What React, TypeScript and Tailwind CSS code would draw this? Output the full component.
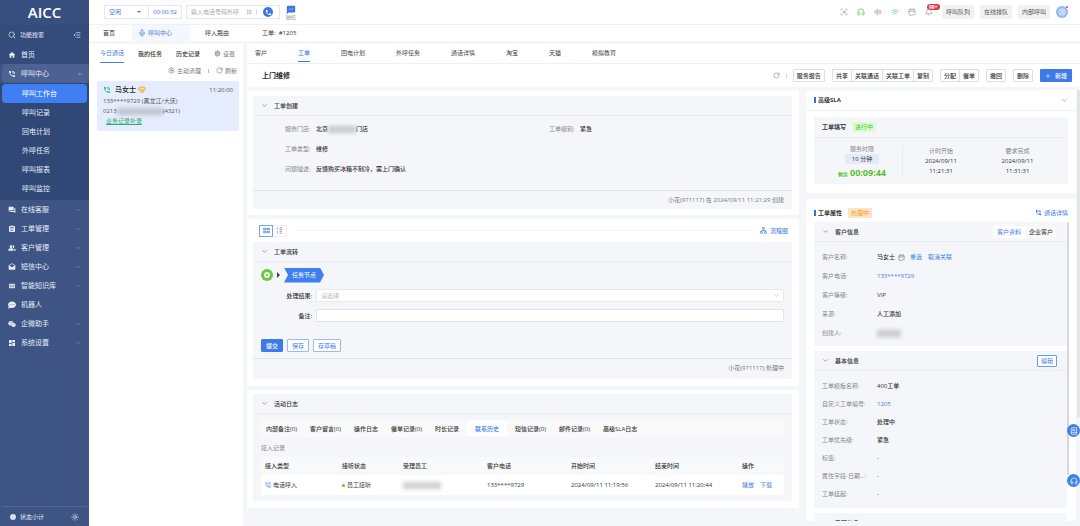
import { useState, type ReactNode } from "react";
import clsx from "clsx";
import {
  AudioLines,
  Bell,
  BookText,
  CalendarMinus,
  ChevronDown,
  ChevronUp,
  CircleUserRound,
  Grip,
  Headphones,
  ListIndentDecrease,
  Mic,
  Network,
  PhoneIncoming,
  Plus,
  RotateCw,
  ScanSearch,
  Search,
  Settings,
  Sun,
  Wifi,
} from "lucide-react";
import { FaCommentDots, FaWeixin } from "react-icons/fa";
import {
  MdAssignment,
  MdDashboard,
  MdDrafts,
  MdForum,
  MdHome,
  MdOutlineSettings,
  MdPeopleAlt,
  MdPhone,
  MdPhoneInTalk,
  MdSms,
  MdViewModule,
} from "react-icons/md";

type MenuItem = { label: string; icon: ReactNode; arrow?: boolean };

const menu: MenuItem[] = [
  { label: "在线客服", icon: <MdForum />, arrow: true },
  { label: "工单管理", icon: <MdAssignment />, arrow: true },
  { label: "客户管理", icon: <MdPeopleAlt />, arrow: true },
  { label: "短信中心", icon: <MdDrafts />, arrow: true },
  { label: "智能知识库", icon: <MdViewModule />, arrow: true },
  { label: "机器人", icon: <FaCommentDots /> },
  { label: "企微助手", icon: <FaWeixin />, arrow: true },
  { label: "系统设置", icon: <MdDashboard />, arrow: true },
];

const callMenu = ["呼叫工作台", "呼叫记录", "回电计划", "外呼任务", "呼叫报表", "呼叫监控"];
const detailTabs = ["客户", "工单", "回电计划", "外呼任务", "通话详情", "淘宝", "天猫", "模拟教育"];
const logTabs = [
  "内部备注(0)",
  "客户留言(0)",
  "操作日志",
  "催单记录(0)",
  "时长记录",
  "联系历史",
  "短信记录(0)",
  "邮件记录(0)",
  "高级SLA日志",
];
const actionGroups = [["服务报告"], ["共享", "关联通话", "关联工单", "复制"], ["分配", "催单"], ["撤回"], ["删除"]];

export default function App() {
  return (
    <div className="flex h-screen overflow-hidden bg-[#f5f6fa] font-['Open_Sans','Noto_Sans_CJK_SC',sans-serif] text-[6px] leading-[10px] text-[#333]">
      <Sidebar />
      <div className="flex min-w-0 flex-1 flex-col">
        <TopBar />
        <PageTabs />
        <div className="flex min-h-0 flex-1 gap-1 pt-[3px]">
          <CallList />
          <main className="flex min-w-0 flex-1 flex-col">
            <DetailTabs />
            <ActionBar />
            <div className="flex min-h-0 flex-1 pt-[3px]">
              <div className="mr-[7px] flex min-w-0 flex-1 flex-col gap-1 overflow-hidden">
                <CreatePanel />
                <FlowPanel />
                <LogPanel />
              </div>
              <aside className="flex w-[270px] shrink-0 flex-col gap-1.5 pb-[5px]">
                <SlaPanel />
                <PropsPanel />
              </aside>
              <span className="ml-px h-3/4 w-[3px] shrink-0 bg-[#e3e4e6]" />
            </div>
          </main>
        </div>
      </div>
      <div className="fixed right-0 bottom-[39px] flex flex-col gap-[37px]">
        <button aria-label="知识库" className="grid size-[13px] place-items-center rounded-full bg-[#4381e6] text-white">
          <BookText className="size-2" />
        </button>
        <button aria-label="客服" className="grid size-[13px] place-items-center rounded-full bg-[#4381e6] text-white">
          <Headphones className="size-2" />
        </button>
      </div>
    </div>
  );
}

/* 左侧导航 */
function Sidebar() {
  return (
    <nav className="flex w-[89px] shrink-0 flex-col bg-[#3d5485] text-[7px] text-[#e6ecf8]">
      <div className="bg-[#38507f] text-center text-[15px] leading-[25px] font-semibold text-white">AICC</div>
      <div className="flex h-[20px] items-center bg-[#334c7b] px-2 text-[6px]">
        <Search className="mr-1 size-2" />
        <input aria-label="功能搜索" placeholder="功能搜索" className="w-0 flex-1 bg-transparent outline-none placeholder:text-[#e6ecf8]" />
        <ListIndentDecrease className="size-2" />
      </div>
      <a href="#" className="flex h-[19px] items-center gap-[5px] bg-[#334c7b] px-2">
        <MdHome className="size-2" />
        首页
      </a>
      <button className="ml-0.5 flex h-[19px] items-center gap-[5px] rounded-sm bg-[#4c6293] px-1.5">
        <MdPhoneInTalk className="size-2" />
        呼叫中心
        <ChevronUp className="ml-auto size-1.5" />
      </button>
      <div className="bg-[#2f4876] px-0.5 pt-px pb-[2px]">
        {callMenu.map((m, i) => (
          <a
            key={m}
            href="#"
            className={clsx("flex h-[19px] items-center rounded-sm pl-5", i === 0 && "bg-[#3f7ff3] text-white")}
          >
            {m}
          </a>
        ))}
      </div>
      {menu.map((m) => (
        <button key={m.label} className="flex h-[19px] items-center gap-[5px] px-2 [&>svg:first-child]:size-2">
          {m.icon}
          {m.label}
          {m.arrow && <ChevronDown className="ml-auto size-1.5 text-[#93a4c8]" />}
        </button>
      ))}
      <div className="mx-0.5 mt-auto flex h-[20px] items-center border-t border-[#4e679b] px-2 text-[6px]">
        <span className="mr-1 size-[6px] rounded-full bg-[#d5def0]" />
        状态小计
        <Sun className="ml-auto size-2" />
      </div>
    </nav>
  );
}

function TopBar() {
  return (
    <header className="flex h-[25px] shrink-0 items-center border-b border-[#f0f1f3] bg-white pr-3 pl-[15px]">
      <div className="flex h-[14px] w-[78px] items-center rounded-[1px] border border-[#e3e6ec] px-1 text-[#3d74d8]">
        <select aria-label="坐席状态" className="w-7 appearance-none bg-transparent outline-none">
          <option>空闲</option>
        </select>
        <span className="mr-1 border-x-2 border-t-2 border-x-transparent border-t-[#3d74d8]" />
        <span className="ml-auto border-l border-[#dfe3ea] pl-1">00:00:32</span>
      </div>
      <div className="ml-1 flex h-[14px] w-[94px] items-center rounded-[1px] border border-[#e3e6ec] pr-1.5 pl-1">
        <input
          aria-label="电话号码"
          placeholder="输入电话号码外呼"
          className="w-0 flex-1 bg-transparent outline-none placeholder:text-[#aaa]"
        />
        <Grip className="mr-1 size-1.5 text-[#aaa]" />
        <span className="mr-1.5 h-1.5 w-px bg-[#ddd]" />
        <button aria-label="呼出" className="grid size-[10px] shrink-0 place-items-center rounded-full bg-[#3f7bdb] text-white">
          <MdPhone className="size-[7px]" />
        </button>
      </div>
      <button className="ml-1.5 flex flex-col items-center text-[#777]">
        <MdSms className="size-2.5 text-[#3f74e0]" />
        <span className="text-[5px] leading-[5px]">短信</span>
      </button>
      <div className="ml-auto flex items-center gap-[9px] text-[#999] [&>svg]:size-2">
        <ScanSearch />
        <Headphones className="text-[#58c94f]" />
        <AudioLines />
        <Wifi className="text-[#54c9a0]" />
        <CalendarMinus />
        <span className="relative">
          <Bell className="size-2" />
          <b className="absolute -top-1 left-0.5 rounded-full bg-[#e0393e] px-0.5 text-[5px] leading-[6px] text-white">99+</b>
        </span>
      </div>
      <div className="ml-[9px] flex items-center gap-1.5">
        {["呼叫队列", "在线排队", "内部呼叫"].map((b) => (
          <button key={b} className="h-[14px] rounded-[2px] bg-[#f1f1f2] px-1 text-[#555]">
            {b}
          </button>
        ))}
        <span className="relative grid size-3 place-items-center rounded-full bg-[#94b5f2] text-white">
          <CircleUserRound className="size-2" />
          <i className="absolute top-0 right-0 size-[2px] rounded-full bg-[#e0393e]" />
        </span>
      </div>
    </header>
  );
}

function PageTabs() {
  return (
    <div className="flex h-4 shrink-0 items-center bg-white pl-[14px]">
      <a href="#">首页</a>
      <a href="#" className="ml-[17px] flex h-full w-[58px] items-center gap-0.5 bg-[#f4f7fd] pl-1.5 text-[#4a80e0]">
        <Mic className="size-2" />
        呼叫中心
      </a>
      <a href="#" className="ml-[15px]">呼入路由</a>
      <a href="#" className="ml-[33px]">工单:&nbsp; #1205</a>
    </div>
  );
}

/* 通话列表 */
function CallList() {
  return (
    <section className="w-[154px] shrink-0 bg-white pl-2">
      <div className="flex h-[19px] items-center gap-[14px] pl-[3px]">
        <button className="h-full border-b border-[#4a80e0] text-[#4a80e0]">今日通话</button>
        <button className="font-medium">我的任务</button>
        <button className="font-medium">历史记录</button>
        <button className="flex items-center gap-0.5 text-[#777]">
          <MdOutlineSettings className="size-[7px]" />
          设置
        </button>
      </div>
      <div className="flex h-[15px] items-center justify-end gap-[7px] pr-1.5 text-[#777]">
        <button className="flex items-center gap-0.5">
          <Settings className="size-[7px]" />
          主动清理
        </button>
        <span className="h-1 w-px bg-[#bbb]" />
        <button className="flex items-center gap-0.5">
          <RotateCw className="size-[7px]" />
          刷新
        </button>
      </div>
      <article className="mt-[3px] mr-1 h-[50px] rounded-[2px] bg-[#e5ecfd] px-1.5 pt-1 text-[#555]">
        <div className="flex items-center">
          <MdPhoneInTalk className="mr-1 size-2 text-[#1fbfa0]" />
          <b className="text-[7px] font-medium text-[#222]">马女士</b>
          <VipBadge />
          <time className="ml-auto">11:20:00</time>
        </div>
        <p className="mt-px">133****9729 (黑龙江/大庆)</p>
        <p className="flex items-center">
          0213
          <Masked className="w-[46px]" />
          (4321)
        </p>
        <a href="#" className="ml-[3px] block text-[#2fae6b] underline underline-offset-1">业务记录补录</a>
      </article>
    </section>
  );
}

function VipBadge() {
  return (
    <svg viewBox="0 0 16 16" className="ml-0.5 size-2" fill="none">
      <path d="M4 2h8l3 4-7 8-7-8z" fill="#ffe1b8" stroke="#f2a33c" strokeWidth="2" strokeLinejoin="round" />
      <path d="M5 6l3 4 3-4" stroke="#f2a33c" strokeWidth="1.8" />
    </svg>
  );
}

// 脱敏内容
function Masked({ className }: { className: string }) {
  return <span className={clsx("inline-block h-[7px] shrink-0 bg-[#888]/40 blur-[2px]", className)} />;
}

function DetailTabs() {
  const [tab, setTab] = useState("工单");
  return (
    <div className="flex h-5 shrink-0 gap-[31px] border-b border-[#f0f1f3] bg-white pl-2">
      {detailTabs.map((t) => (
        <button
          key={t}
          onClick={() => setTab(t)}
          className={clsx("mb-px border-b", tab === t ? "border-[#3d7de6] font-medium text-[#3d7de6]" : "border-transparent text-[#444]")}
        >
          {t}
        </button>
      ))}
    </div>
  );
}

function ActionBar() {
  return (
    <div className="flex h-[23px] shrink-0 items-center bg-white pr-2 pl-[15px]">
      <h1 className="mr-auto text-[7px] font-bold text-[#222]">上门维修</h1>
      <button aria-label="刷新" className="text-[#888]">
        <RotateCw className="size-[7px]" />
      </button>
      <span className="mx-1.5 h-1.5 w-px bg-[#ddd]" />
      <div className="flex gap-[7px]">
        {actionGroups.map((group) => (
          <div key={group[0]} className="flex divide-x divide-[#dcdfe4] rounded-[1px] border border-[#dcdfe4]">
            {group.map((a) => (
              <button key={a} className="h-[11px] px-[3px] font-medium whitespace-nowrap">
                {a}
              </button>
            ))}
          </div>
        ))}
        <button className="flex h-[13px] w-8 items-center justify-center gap-1 rounded-[1px] bg-[#3d7be8] font-medium text-white">
          <Plus className="size-1.5" />
          新增
        </button>
      </div>
    </div>
  );
}

function SectionHead({ title, children }: { title: string; children?: ReactNode }) {
  return (
    <div className="flex h-5 items-center border-b border-[#ebedf2] pr-2.5 pl-2">
      <ChevronDown className="mr-1.5 size-[7px] text-[#666]" />
      <h2 className="mr-auto font-medium">{title}</h2>
      {children}
    </div>
  );
}

function Field({ label, children }: { label: string; children: ReactNode }) {
  return (
    <div className="flex h-5 items-center">
      <dt className="w-[31px] text-[#888]">{label}:</dt>
      <dd className="flex items-center font-medium">{children}</dd>
    </div>
  );
}

function CreatePanel() {
  return (
    <section className="rounded-[2px] bg-white py-1.5 pr-[7px] pl-1.5">
      <div className="rounded-[2px] bg-[#f5f6fa]">
        <SectionHead title="工单创建" />
        <dl className="grid grid-cols-[5fr_4fr] px-8 pt-[3px] pb-[11px]">
          <Field label="报修门店">
            北京
            <Masked className="w-[28px]" />
            门店
          </Field>
          <Field label="工单级别">紧急</Field>
          <div className="col-span-2">
            <Field label="工单类型">维修</Field>
          </div>
          <div className="col-span-2">
            <Field label="问题描述">反馈购买冰箱不制冷，需上门确认</Field>
          </div>
        </dl>
        <p className="border-t border-[#e2e4e9] px-2 py-1 text-right text-[#777]">小花(971117) 在 2024/09/11 11:21:29 创建</p>
      </div>
    </section>
  );
}

function FlowPanel() {
  return (
    <section className="rounded-[2px] bg-white pr-[7px] pb-[7px] pl-1.5">
      <div className="flex h-[23px] items-center pr-1 pl-1.5">
        <button aria-label="卡片视图" className="grid h-[12px] w-[14px] place-items-center border border-[#7aa2e8] text-[#5b8de8]">
          <RowsIcon />
        </button>
        <button aria-label="列表视图" className="grid h-[12px] w-[14px] place-items-center border border-l-0 border-[#eceef2] text-[#999]">
          <ColsIcon />
        </button>
        <span className="mx-2 h-px flex-1 bg-[#f1f2f5]" />
        <a href="#" className="flex items-center gap-[3px] text-[#3d7be8]">
          <Network className="size-[7px]" />
          流程图
        </a>
      </div>
      <div className="rounded-[2px] bg-[#f5f6fa]">
        <SectionHead title="工单流转" />
        <div className="flex h-[26px] items-center pl-2">
          <span className="grid size-3 place-items-center rounded-full bg-[#6cc644]">
            <span className="size-[6px] rounded-full border-2 border-[#e9f7e0] bg-[#6cc644]" />
          </span>
          <span className="mx-1 border-y-[3px] border-l-[3px] border-y-transparent border-l-[#444]" />
          <span className="grid h-[15px] w-10 place-items-center bg-[#3f7ff0] text-white [clip-path:polygon(0_0,90%_0,100%_50%,90%_100%,0_100%,10%_50%)]">
            任务节点
          </span>
        </div>
        <form className="pr-2" onSubmit={(e) => e.preventDefault()}>
          <div className="flex h-[15px] items-center">
            <label htmlFor="result" className="w-[63px] pr-1 text-right font-medium">处理结果:</label>
            <div className="relative flex flex-1">
              <select
                id="result"
                className="h-[13px] w-full appearance-none rounded-[1px] border border-[#e6e9ee] bg-white px-1 text-[#bbb] outline-none"
              >
                <option>请选择</option>
              </select>
              <ChevronDown className="pointer-events-none absolute top-[3px] right-1 size-[7px] text-[#aaa]" />
            </div>
          </div>
          <div className="mt-[5px] flex h-[15px] items-center">
            <label htmlFor="remark" className="w-[63px] pr-1 text-right font-medium">备注:</label>
            <input id="remark" className="h-[13px] flex-1 rounded-[1px] border border-[#dfe3ea] bg-white px-1 outline-none" />
          </div>
          <div className="mt-4 mb-1.5 flex gap-1 pl-2">
            <button className="h-[13px] rounded-[1px] border border-[#3d7be8] bg-[#3d7be8] px-1 font-medium text-white">提交</button>
            <button className="h-[13px] rounded-[1px] border border-[#9dbbf0] bg-white px-1 text-[#3d7be8]">保存</button>
            <button className="h-[13px] rounded-[1px] border border-[#9dbbf0] bg-white px-1 text-[#3d7be8]">存草稿</button>
          </div>
        </form>
        <p className="border-t border-[#e2e4e9] px-2 pt-1 pb-1.5 text-right text-[#777]">小花(971117) 处理中</p>
      </div>
    </section>
  );
}

function RowsIcon() {
  return (
    <svg viewBox="0 0 16 16" className="size-[7px]" fill="none" stroke="currentColor" strokeWidth="2">
      <path d="M1 3h6v3H1zM9 3h6v3H9zM1 10h6v3H1zM9 10h6v3H9z" />
    </svg>
  );
}

function ColsIcon() {
  return (
    <svg viewBox="0 0 16 16" className="size-[7px]" fill="none" stroke="currentColor" strokeWidth="2">
      <path d="M3 1v5M3 9v6M8 2h6M8 6h6M8 10h6M8 14h6" />
    </svg>
  );
}

function LogPanel() {
  const [tab, setTab] = useState("联系历史");
  return (
    <section className="rounded-[2px] bg-white pt-1 pr-[7px] pb-[7px] pl-1.5">
      <div className="rounded-[2px] bg-[#f5f6fa] pb-1.5">
        <SectionHead title="活动日志" />
        <div className="mx-2 mt-1.5 flex h-[17px] items-center gap-[3px] bg-[#f9f9fa]">
          {logTabs.map((t) => (
            <button
              key={t}
              onClick={() => setTab(t)}
              className={clsx(
                "h-[15px] rounded-[1px] font-medium whitespace-nowrap",
                tab === t ? "bg-white px-2 text-[#3d7be8]" : "px-[5px]",
              )}
            >
              {t}
            </button>
          ))}
        </div>
        <h3 className="mt-1.5 mb-1 px-2 text-[#888]">接入记录</h3>
        <div className="px-2">
          <table className="w-full table-fixed text-left">
            <thead className="bg-[#f8f9fb]">
              <tr className="h-[18px] [&>th]:font-medium">
                <th className="w-[81px] pl-1">接入类型</th>
                <th className="w-[61px]">接听状态</th>
                <th className="w-[84px]">受理员工</th>
                <th className="w-[84px]">客户电话</th>
                <th className="w-[84px]">开始时间</th>
                <th className="w-[87px]">结束时间</th>
                <th>操作</th>
              </tr>
            </thead>
            <tbody className="bg-white">
              <tr className="h-5">
                <td className="pl-1">
                  <span className="flex items-center gap-0.5">
                    <PhoneIncoming className="size-1.5 text-[#3d7be8]" />
                    电话呼入
                  </span>
                </td>
                <td>
                  <span className="flex items-center gap-0.5">
                    <i className="size-[3px] rounded-full bg-[#5cc02f]" />
                    员工接听
                  </span>
                </td>
                <td>
                  <Masked className="w-[38px] align-middle" />
                </td>
                <td>133****9729</td>
                <td>2024/09/11 11:19:56</td>
                <td>2024/09/11 11:20:44</td>
                <td>
                  <span className="flex gap-1.5 text-[#3d7be8]">
                    <a href="#">播放</a>
                    <a href="#">下载</a>
                  </span>
                </td>
              </tr>
            </tbody>
          </table>
        </div>
      </div>
    </section>
  );
}

function PanelTitle({ children }: { children: ReactNode }) {
  return <h2 className="border-l-2 border-[#3d6fd0] pl-0.5 leading-[6px] font-bold">{children}</h2>;
}

function SlaPanel() {
  return (
    <section className="shrink-0 rounded-[2px] bg-white pb-[9px]">
      <div className="flex h-[21px] items-center justify-between border-b border-[#f0f1f3] px-2">
        <PanelTitle>高级SLA</PanelTitle>
        <ChevronDown className="size-[7px] text-[#777]" />
      </div>
      <div className="mx-2 mt-1.5 rounded-[2px] bg-[#f5f6fa]">
        <div className="flex h-[21px] items-center gap-1.5 border-b border-[#eaecf0] px-2">
          <h3 className="font-bold">工单填写</h3>
          <span className="rounded-[2px] bg-[#ddfbd9] px-[3px] text-[#52c41a]">进行中</span>
        </div>
        <div className="grid h-[46px] grid-cols-[88px_1fr_1fr] items-center pr-3 text-center">
          <div className="flex flex-col items-center pl-2">
            <span className="text-[#888]">服务时限</span>
            <span className="w-[34px] rounded-[1px] bg-[#e3ebfb]">10 分钟</span>
            <span className="mt-[3px] flex items-baseline gap-0.5 font-bold text-[#55bf30]">
              <small className="text-[5px]">剩余</small>
              <span className="text-[9px] leading-3">00:09:44</span>
            </span>
          </div>
          <StampCell label="计时开始" time="11:21:31" />
          <StampCell label="要求完成" time="11:31:31" />
        </div>
      </div>
    </section>
  );
}

function StampCell({ label, time }: { label: string; time: string }) {
  return (
    <div className="first-of-type:border-0 nth-2:border-l nth-2:border-[#e9ebf0]">
      <p className="text-[#888]">{label}</p>
      <p>2024/09/11</p>
      <p>{time}</p>
    </div>
  );
}

function Row({ label, children }: { label: string; children?: ReactNode }) {
  return (
    <div className="flex h-[18px] items-center">
      <dt className="w-[55px] shrink-0 text-[#888]">{label}:</dt>
      <dd className="flex items-center font-medium">{children}</dd>
    </div>
  );
}

function PropsPanel() {
  return (
    <section className="flex min-h-0 flex-1 flex-col rounded-[2px] bg-white">
      <div className="flex h-[23px] shrink-0 items-center px-2 pt-1">
        <PanelTitle>工单属性</PanelTitle>
        <span className="ml-1.5 rounded-[1px] bg-[#ffe4c2] px-[3px] text-[#f3983a]">处理中</span>
        <a href="#" className="ml-auto flex items-center gap-0.5 text-[#3d7be8]">
          <MdPhoneInTalk className="size-[7px]" />
          通话详情
        </a>
      </div>
      <div className="mr-[7px] ml-2 flex min-h-0 flex-1">
        <div className="flex min-w-0 flex-1 flex-col gap-[5px] overflow-hidden">
          <div className="shrink-0 rounded-[2px] bg-[#f5f6fa]">
            <SectionHead title="客户信息">
              <div className="flex bg-[#f9f9fa]">
                <button className="h-3 rounded-[1px] bg-white px-1 text-[#3d7be8]">客户资料</button>
                <button className="h-3 px-1">企业客户</button>
              </div>
            </SectionHead>
            <dl className="flex flex-col gap-px px-2 pt-1.5 pb-1">
              <Row label="客户名称">
                马女士
                <CalendarMinus className="mx-[3px] size-[7px] text-[#777]" />
                <a href="#" className="mr-1.5 ml-0.5 font-normal text-[#3d7be8]">重选</a>
                <a href="#" className="font-normal text-[#3d7be8]">取消关联</a>
              </Row>
              <Row label="客户电话">
                <a href="#" className="font-normal text-[#3d7be8]">133****9729</a>
              </Row>
              <Row label="客户等级">VIP</Row>
              <Row label="来源">人工添加</Row>
              <Row label="创建人">
                <Masked className="w-6" />
              </Row>
            </dl>
          </div>
          <div className="shrink-0 rounded-[2px] bg-[#f5f6fa]">
            <SectionHead title="基本信息">
              <button className="h-[12px] rounded-[1px] border border-[#6c9bee] bg-white px-[3px] text-[#3d7be8]">编辑</button>
            </SectionHead>
            <dl className="px-2 pt-1.5 pb-[5px]">
              <Row label="工单模板名称">400工单</Row>
              <Row label="自定义工单编号">
                <a href="#" className="font-normal text-[#3d7be8]">1205</a>
              </Row>
              <Row label="工单状态">处理中</Row>
              <Row label="工单优先级">紧急</Row>
              <Row label="标签">-</Row>
              <Row label="属性字段-日期...">-</Row>
              <Row label="工单挂起">-</Row>
            </dl>
          </div>
          <div className="shrink-0 rounded-[2px] bg-[#f5f6fa]">
            <SectionHead title="受理信息" />
          </div>
        </div>
        <span className="h-[253px] w-[2px] shrink-0 rounded-full bg-[#d5d7db]" />
      </div>
    </section>
  );
}
